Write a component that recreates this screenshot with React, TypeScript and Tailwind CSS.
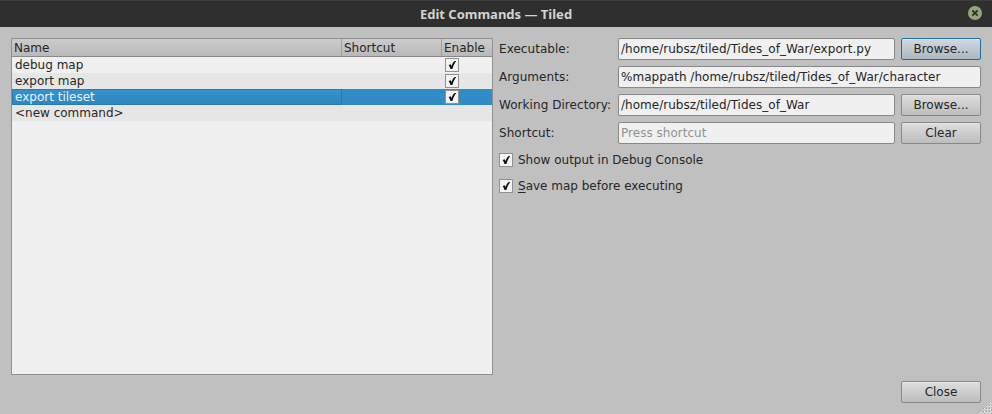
import type { ReactNode } from "react";

function Check() {
  return (
    <span className="block h-[14px] w-[14px] shrink-0 border border-[#919191] bg-[#f3f3f3]">
      <svg viewBox="0 0 12 12" className="block h-3 w-3">
        <path d="M2.7 6 L4.7 5.2 L5.4 6.9 C6.2 4.8 7.5 2.8 8.8 1.9 L10.2 2 C8.6 4.2 7.2 7 6.4 10.1 L4.5 10.1 C4.1 8.6 3.5 7.3 2.7 6 Z" fill="#101010" />
      </svg>
    </span>
  );
}

function Button({ children, focused = false }: { children: ReactNode; focused?: boolean }) {
  return (
    <button
      className={
        "flex h-[22px] w-20 shrink-0 items-center justify-center rounded-[2px] border pb-px leading-[14px] " +
        (focused
          ? "border-[#1c6ea8] bg-linear-to-b from-[#d0d9e1] to-[#acb8c2] shadow-[inset_0_1px_0_#dde6ed]"
          : "border-[#888888] bg-linear-to-b from-[#dedede] to-[#bdbdbd] shadow-[inset_0_1px_0_#e6e6e6]")
      }
    >
      {children}
    </button>
  );
}

function Field({ label, value, muted = false, children }: { label: string; value: string; muted?: boolean; children?: ReactNode }) {
  return (
    <div className="flex h-[22px] items-center gap-1.5">
      <span className="w-[113px] shrink-0 whitespace-nowrap pb-px leading-[14px] tracking-[0.05px]">{label}</span>
      <div
        className={
          "flex h-[22px] min-w-0 flex-1 items-center whitespace-pre rounded-[2px] border border-[#888888] bg-[#f0f0f0] pb-px pl-[2px] leading-[14px] tracking-[0.02px] " +
          (muted ? "text-[#929292]" : "")
        }
      >
        {value}
      </div>
      {children}
    </div>
  );
}

const commands = [
  { name: "debug map", enabled: true, selected: false },
  { name: "export map", enabled: true, selected: false },
  { name: "export tileset", enabled: true, selected: true },
  { name: "<new command>", enabled: false, selected: false },
];

function CommandTable() {
  return (
    <div className="h-[337px] w-[482px] shrink-0 border border-[#919191] bg-[#f0f0f0]">
      <div className="flex h-[18px] border-b border-[#888888] bg-linear-to-b from-[#cccccc] to-[#b9b9b9]">
        <span className="w-[330px] border-r border-[#a0a0a0] pl-[2px] pt-px leading-4">Name</span>
        <span className="w-[100px] border-r border-[#a0a0a0] pl-[2px] pt-px leading-4">Shortcut</span>
        <span className="pl-[2px] pt-px leading-4">Enable</span>
      </div>
      {commands.map((c, i) => (
        <div
          key={c.name}
          className={
            "flex h-4 leading-4 " +
            (c.selected ? "bg-[#308cc6] text-[#eaf3fa]" : i % 2 ? "bg-[#e6e6e6]" : "bg-[#f0f0f0]")
          }
        >
          <span
            className={
              "flex h-4 w-[330px] items-center pl-[3px] " +
              (c.selected ? "bg-linear-to-b from-[#3493ce] to-[#2e86be] shadow-[inset_0_0_0_1px_#287ab0]" : "")
            }
          >
            {c.name}
          </span>
          <span className="w-[103px]" />
          <span className="pt-px">{c.enabled && <Check />}</span>
        </div>
      ))}
    </div>
  );
}

const gripDots = [
  [9, 0], [6, 3], [9, 3], [3, 6], [6, 6], [9, 6], [0, 9], [3, 9], [6, 9], [9, 9],
];

export default function App() {
  return (
    <div className="relative flex h-[414px] w-[992px] flex-col overflow-hidden bg-[#c0c0c0] font-['DejaVu_Sans',sans-serif] text-[12px] text-[#262626]">
      <header className="grid h-[27px] shrink-0 grid-cols-[1fr_auto_1fr] items-center border-t border-[#3c3c3c] bg-[#2f2f2f]">
        <span />
        <h1 className="pb-px font-['Noto_Sans',sans-serif] text-[13px] font-bold leading-4 text-[#d3d3d3]">Edit Commands — Tiled</h1>
        <svg viewBox="0 0 14 14" className="mr-[10px] mt-[5px] h-[14px] w-[14px] self-start justify-self-end">
          <circle cx="7" cy="7" r="7" fill="#92a878" />
          <path d="M4.3 4.3 L9.7 9.7 M9.7 4.3 L4.3 9.7" stroke="#2f2f2f" strokeWidth="1.8" />
        </svg>
      </header>
      <main className="flex gap-1.5 pl-[11px] pr-[11px] pt-[11px]">
        <CommandTable />
        <section className="flex min-w-0 flex-1 flex-col gap-1.5">
          <Field label="Executable:" value="/home/rubsz/tiled/Tides_of_War/export.py">
            <Button focused>Browse...</Button>
          </Field>
          <Field label="Arguments:" value="%mappath /home/rubsz/tiled/Tides_of_War/character" />
          <Field label="Working Directory:" value="/home/rubsz/tiled/Tides_of_War">
            <Button>Browse...</Button>
          </Field>
          <Field label="Shortcut:" value="Press shortcut" muted>
            <Button>Clear</Button>
          </Field>
          <label className="mt-[3px] flex h-[14px] items-center gap-[5px] leading-[14px]">
            <Check />
            <span>Show output in Debug Console</span>
          </label>
          <label className="mt-1.5 flex h-[14px] items-center gap-[5px] leading-[14px]">
            <Check />
            <span><span className="underline underline-offset-2">S</span>ave map before executing</span>
          </label>
        </section>
      </main>
      <footer className="mt-1.5 flex justify-end pr-[11px]">
        <Button>Close</Button>
      </footer>
      <svg viewBox="0 0 12 12" className="absolute bottom-0 right-0 h-3 w-3" shapeRendering="crispEdges">
        {gripDots.map(([x, y]) => (
          <g key={`${x}-${y}`}>
            <rect x={x} y={y} width="2" height="2" fill="#e2e2e2" />
            <rect x={x} y={y} width="1" height="1" fill="#9c9c9c" />
          </g>
        ))}
      </svg>
    </div>
  );
}
